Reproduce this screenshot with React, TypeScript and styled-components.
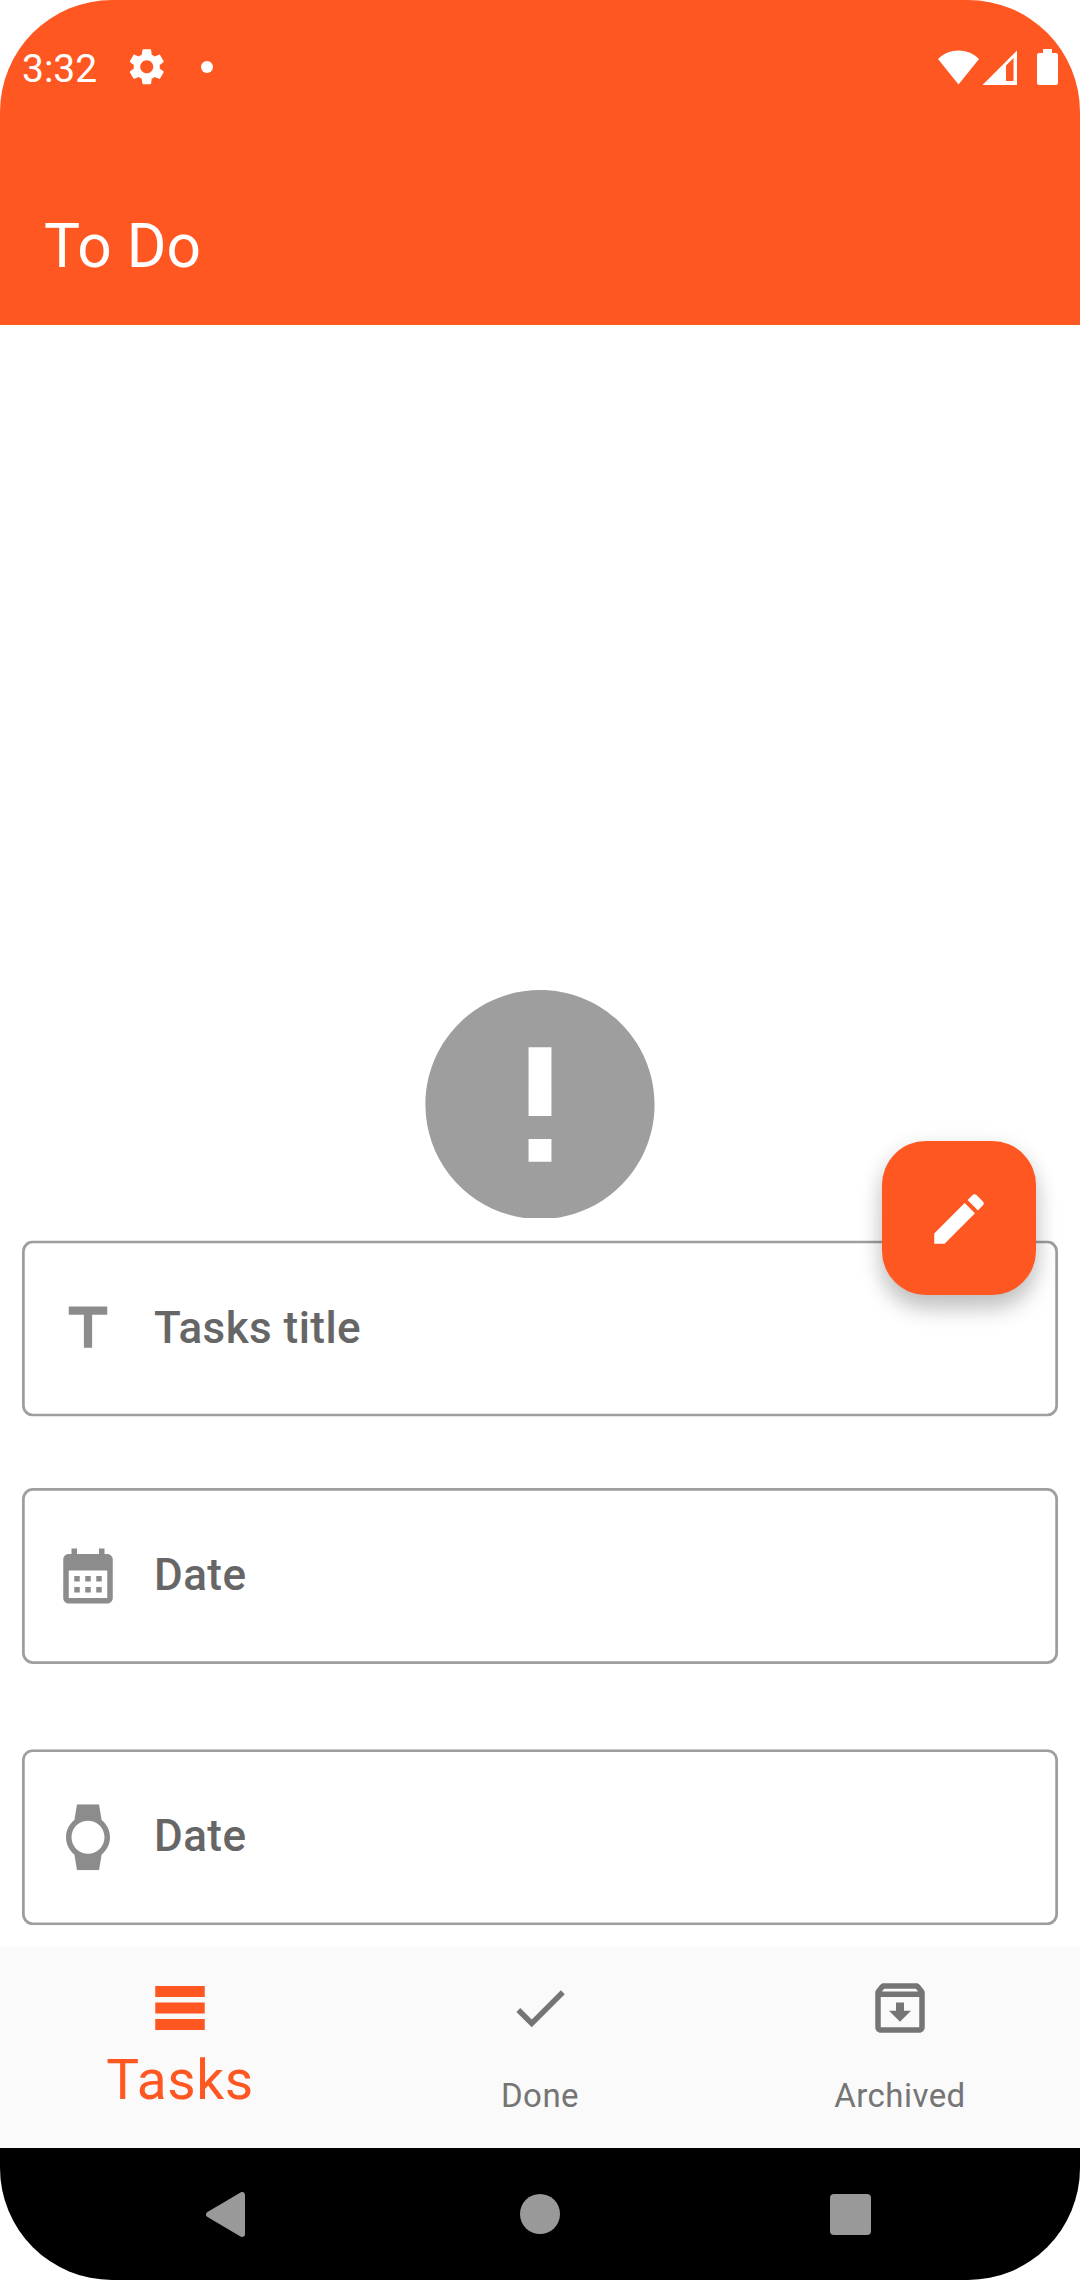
import React from 'react';
import styled, { createGlobalStyle } from 'styled-components';

const ACCENT = '#ff5722';

const GlobalStyle = createGlobalStyle`
  *, *::before, *::after { box-sizing: border-box; }
  body {
    margin: 0;
    background: #fff;
    font-family: Roboto, 'Noto Sans', sans-serif;
  }
  svg { display: block; flex: none; }
`;

const Screen = styled.div`
  position: relative;
  display: flex;
  flex-direction: column;
  width: 1080px;
  height: 2280px;
  overflow: hidden;
  border-radius: 112px;
  background: #fff;
`;

const Header = styled.header`
  display: flex;
  flex-direction: column;
  height: 325px;
  background: ${ACCENT};
  color: #fff;
`;

const StatusBar = styled.div`
  display: flex;
  align-items: center;
  justify-content: space-between;
  height: 134px;
  padding: 0 22px 0 22px;
`;

const StatusGroup = styled.div`
  display: flex;
  align-items: center;
`;

const Clock = styled.span`
  width: 103px;
  font-size: 39px;
  line-height: 46px;
  padding-top: 3px;
`;

const Dot = styled.span`
  width: 12px;
  height: 12px;
  margin-left: 32px;
  border-radius: 50%;
  background: #fff;
`;

const Title = styled.h1`
  margin: 0;
  padding: 77px 44px 0;
  font-size: 60.5px;
  font-weight: 400;
  line-height: 72px;
`;

const Body = styled.main`
  display: flex;
  flex: 1;
  flex-direction: column;
  min-height: 0;
`;

const EmptyState = styled.section`
  display: flex;
  flex: 1;
  justify-content: center;
  min-height: 0;
  padding-top: 642px;
  overflow: hidden;
  color: #9e9e9e;
`;

const Form = styled.form`
  display: flex;
  flex-direction: column;
  padding: 22px;
`;

const Field = styled.label<{ $gap?: number; $shift?: number }>`
  display: flex;
  align-items: center;
  height: 176px;
  margin-top: ${(p) => p.$gap ?? 0}px;
  padding-left: 33px;
  border-radius: 11px;
  box-shadow: inset 0 0 0 2.75px #9e9e9e;
  color: #8c8c8c;
  transform: translateY(${(p) => p.$shift ?? 0}px);
`;

const FieldLabel = styled.span`
  margin-left: 33px;
  padding-bottom: 2px;
  color: #666;
  font-size: 44px;
  font-weight: 500;
  line-height: 60px;
  letter-spacing: 0.45px;
`;

const Fab = styled.button`
  position: absolute;
  left: 882px;
  top: 1141px;
  display: flex;
  align-items: center;
  justify-content: center;
  width: 154px;
  height: 154px;
  padding: 1px 0 0;
  border: 0;
  border-radius: 44px;
  background: ${ACCENT};
  color: #fff;
  box-shadow: 0 14px 22px rgba(0, 0, 0, 0.22), 0 3px 24px rgba(0, 0, 0, 0.07);
`;

const Tabs = styled.nav`
  display: grid;
  grid-template-columns: repeat(3, 1fr);
  height: 201px;
  background: #fafafa;
`;

const Tab = styled.div<{ $active?: boolean }>`
  display: flex;
  flex-direction: column;
  align-items: center;
  padding-top: 28px;
  color: ${(p) => (p.$active ? ACCENT : '#757575')};
`;

const TabLabel = styled.span<{ $active?: boolean }>`
  margin-top: ${(p) => (p.$active ? 6 : 33)}px;
  font-size: ${(p) => (p.$active ? 55 : 33)}px;
  line-height: ${(p) => (p.$active ? 66 : 44)}px;
  letter-spacing: ${(p) => (p.$active ? 0.6 : 0.45)}px;
`;

const SystemNav = styled.footer`
  display: flex;
  align-items: center;
  height: 132px;
  padding: 0 209px 0 206px;
  background: #000;
  color: #999;
`;

const HomeButton = styled.span`
  width: 40px;
  height: 40px;
  margin: 0 270px 0 275px;
  border-radius: 50%;
  background: currentColor;
`;

const RecentsButton = styled.span`
  width: 41px;
  height: 41px;
  border-radius: 4px;
  background: currentColor;
`;

const Icon = ({ d, size = 66, width = size }: { d: string; size?: number; width?: number }) => (
  <svg width={width} height={size} viewBox="0 0 24 24" fill="currentColor">
    <path d={d} />
  </svg>
);

const icons = {
  settings:
    'M19.14 12.94c.04-.3.06-.61.06-.94 0-.32-.02-.64-.07-.94l2.03-1.58c.18-.14.23-.41.12-.61l-1.92-3.32c-.12-.22-.37-.29-.59-.22l-2.39.96c-.5-.38-1.03-.7-1.62-.94l-.36-2.54c-.04-.24-.24-.41-.48-.41h-3.84c-.24 0-.43.17-.47.41l-.36 2.54c-.59.24-1.13.57-1.62.94l-2.39-.96c-.22-.08-.47 0-.59.22L2.74 8.87c-.12.21-.08.47.12.61l2.03 1.58c-.05.3-.09.63-.09.94s.02.64.07.94l-2.03 1.58c-.18.14-.23.41-.12.61l1.92 3.32c.12.22.37.29.59.22l2.39-.96c.5.38 1.03.7 1.62.94l.36 2.54c.05.24.24.41.48.41h3.84c.24 0 .44-.17.47-.41l.36-2.54c.59-.24 1.13-.56 1.62-.94l2.39.96c.22.08.47 0 .59-.22l1.92-3.32c.12-.22.07-.47-.12-.61l-2.01-1.58zM12 15.6c-1.98 0-3.6-1.62-3.6-3.6s1.62-3.6 3.6-3.6 3.6 1.62 3.6 3.6-1.62 3.6-3.6 3.6z',
  error:
    'M12 2C6.48 2 2 6.48 2 12s4.48 10 10 10 10-4.48 10-10S17.52 2 12 2zm1 15h-2v-2h2v2zm0-4h-2V7h2v6z',
  title: 'M5 4v3h5.5v12h3V7H19V4z',
  calendar:
    'M19 4h-1V2h-2v2H8V2H6v2H5c-1.11 0-1.99.9-1.99 2L3 20c0 1.1.89 2 2 2h14c1.1 0 2-.9 2-2V6c0-1.1-.9-2-2-2zm0 16H5V10h14v10zM9 14H7v-2h2v2zm4 0h-2v-2h2v2zm4 0h-2v-2h2v2zm-8 4H7v-2h2v2zm4 0h-2v-2h2v2zm4 0h-2v-2h2v2z',
  watch:
    'M20 12c0-2.54-1.19-4.81-3.04-6.27L16 0H8l-.95 5.73C5.19 7.19 4 9.45 4 12s1.19 4.81 3.05 6.27L8 24h8l.96-5.73C18.81 16.81 20 14.54 20 12zM6 12c0-3.31 2.69-6 6-6s6 2.69 6 6-2.69 6-6 6-6-2.69-6-6z',
  edit: 'M3 17.25V21h3.75L17.81 9.94l-3.75-3.75L3 17.25zM20.71 7.04c.39-.39.39-1.02 0-1.41l-2.34-2.34c-.39-.39-1.02-.39-1.41 0l-1.83 1.83 3.75 3.75 1.83-1.83z',
  menu: 'M3 4h18v4H3zM3 10h18v4H3zM3 16h18v4H3z',
  check: 'M9 16.17L4.83 12l-1.42 1.41L9 19 21 7l-1.41-1.41z',
  archive:
    'M20.54 5.23l-1.39-1.68C18.88 3.21 18.47 3 18 3H6c-.47 0-.88.21-1.16.55L3.46 5.23C3.17 5.57 3 6.02 3 6.5V19c0 1.1.9 2 2 2h14c1.1 0 2-.9 2-2V6.5c0-.48-.17-.93-.46-1.27zM6.24 5h11.52l.83 1H5.42l.82-1zM5 19V8h14v11H5zm8.45-9h-2.9v3H8l4 4 4-4h-2.55z',
};

const StatusIcons = () => (
  <svg width="120" height="36" viewBox="0 0 120 36" fill="#fff">
    <path d="M0 10C11.5-1.2 29.5-1.2 41 10L20.5 35.5z" />
    <path fillRule="evenodd" d="M44.5 36L79 1.5V36zM68 16.5V32h7.5V9z" />
    <path d="M105 0h9v4h4a2 2 0 0 1 2 2v28a2 2 0 0 1-2 2h-17a2 2 0 0 1-2-2V6a2 2 0 0 1 2-2h4z" />
  </svg>
);

const BackIcon = () => (
  <svg width="39" height="45" viewBox="0 0 39 45" fill="currentColor">
    <path d="M34.5.5C36.8-.7 39 .8 39 3v39c0 2.200-2.200 3.700-4.500 2.500L1.500 25c-2-1.200-2-3.800 0-5z" />
  </svg>
);

export default function App() {
  return (
    <Screen>
      <GlobalStyle />
      <Header>
        <StatusBar>
          <StatusGroup>
            <Clock>3:32</Clock>
            <Icon d={icons.settings} size={43.5} />
            <Dot />
          </StatusGroup>
          <StatusIcons />
        </StatusBar>
        <Title>To Do</Title>
      </Header>
      <Body>
        <EmptyState>
          <Icon d={icons.error} size={275} width={276} />
        </EmptyState>
        <Form>
          <Field $shift={0.5}>
            <Icon d={icons.title} />
            <FieldLabel>Tasks title</FieldLabel>
          </Field>
          <Field $gap={72}>
            <Icon d={icons.calendar} />
            <FieldLabel>Date</FieldLabel>
          </Field>
          <Field $gap={85} $shift={0.2}>
            <Icon d={icons.watch} />
            <FieldLabel>Date</FieldLabel>
          </Field>
        </Form>
      </Body>
      <Tabs>
        <Tab $active>
          <Icon d={icons.menu} />
          <TabLabel $active>Tasks</TabLabel>
        </Tab>
        <Tab>
          <Icon d={icons.check} />
          <TabLabel>Done</TabLabel>
        </Tab>
        <Tab>
          <Icon d={icons.archive} />
          <TabLabel>Archived</TabLabel>
        </Tab>
      </Tabs>
      <SystemNav>
        <BackIcon />
        <HomeButton />
        <RecentsButton />
      </SystemNav>
      <Fab type="button" aria-label="Edit">
        <Icon d={icons.edit} />
      </Fab>
    </Screen>
  );
}
